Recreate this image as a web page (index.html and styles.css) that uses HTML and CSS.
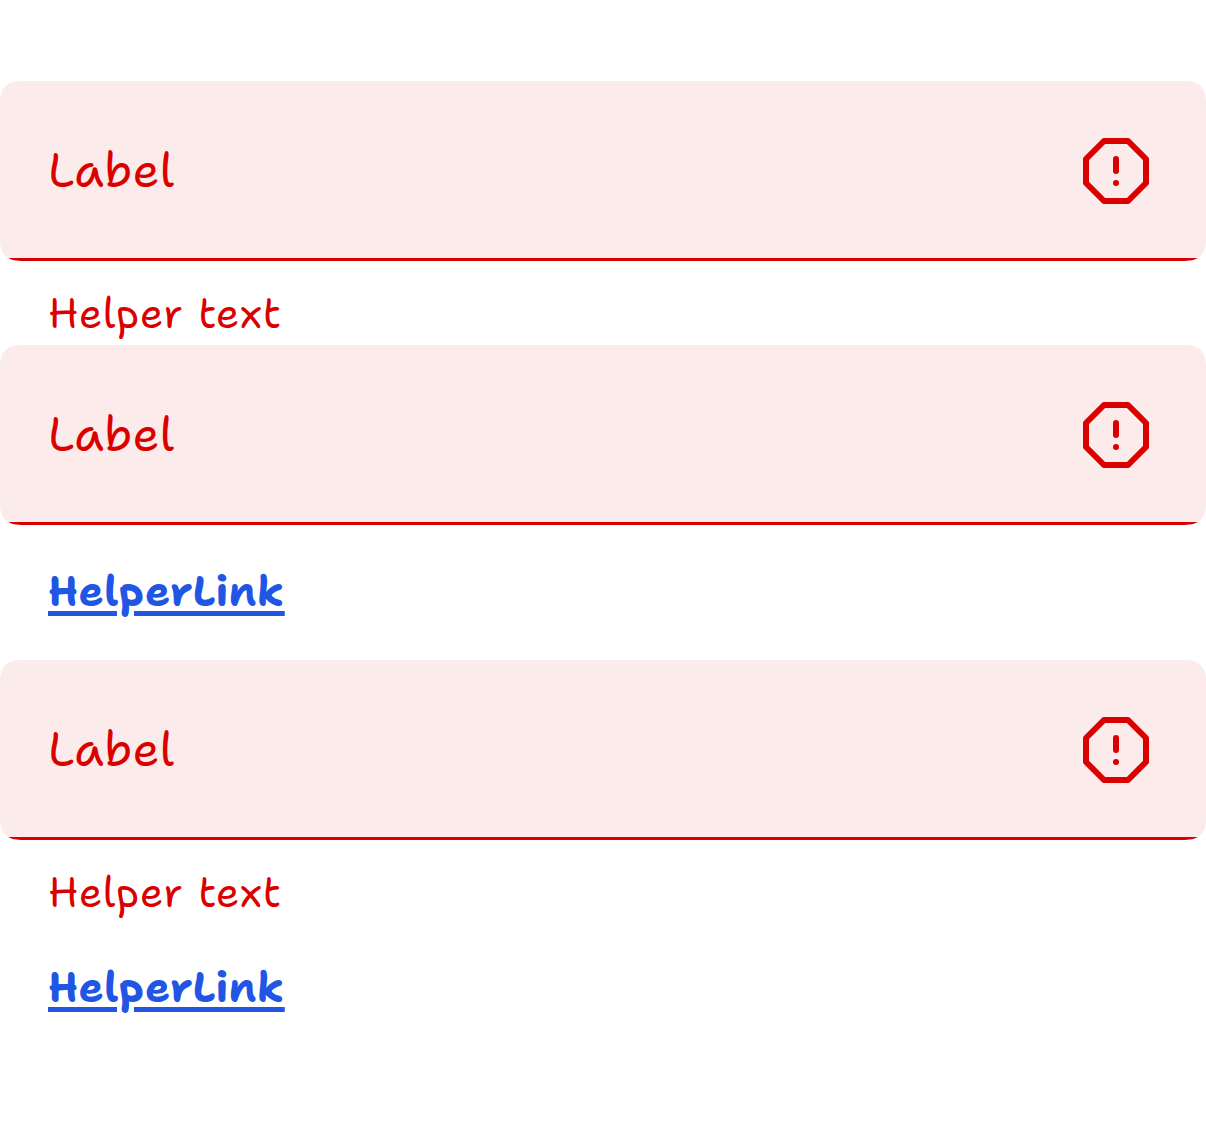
FILE: index.html
```html
<!DOCTYPE html>
<html lang="en">
<head>
<meta charset="utf-8">
<title>Input fields</title>
<link rel="stylesheet" href="styles.css">
</head>
<body>
<svg class="symbols" aria-hidden="true">
  <symbol id="error" viewBox="0 0 24 24">
    <path d="M8 2H16L22 8V16L16 22H8L2 16V8Z M12 8V12 M12 16H12.01" fill="none" stroke="currentColor" stroke-width="2" stroke-linecap="round" stroke-linejoin="round"/>
  </symbol>
</svg>
<main class="form">
  <section>
    <div class="field"><span class="label">Label</span><svg class="icon"><use href="#error"/></svg></div>
    <p class="helper">Helper text</p>
  </section>
  <section>
    <div class="field"><span class="label">Label</span><svg class="icon"><use href="#error"/></svg></div>
    <div class="link-row link-row-alone"><a class="link" href="#">HelperLink</a></div>
  </section>
  <section>
    <div class="field"><span class="label">Label</span><svg class="icon"><use href="#error"/></svg></div>
    <p class="helper">Helper text</p>
    <div class="link-row"><a class="link" href="#">HelperLink</a></div>
  </section>
</main>
</body>
</html>
```
FILE: styles.css
```css
body {
  margin: 0;
  background: #fff;
  color: #db0000;
  font-family: "Shantell Sans", Lato, sans-serif;
}
.symbols { display: none; }
.form { padding-top: 81px; }
.field {
  display: flex;
  align-items: center;
  justify-content: space-between;
  box-sizing: border-box;
  height: 180px;
  padding: 0 54px 0 48px;
  border-radius: 20px;
  background: linear-gradient(#db0000, #db0000) bottom / 100% 3px no-repeat #fbebeb;
}
@supports (corner-shape: superellipse(1.5)) {
  .field {
    border-radius: 24px;
    corner-shape: superellipse(1.5);
  }
}
.label {
  padding-bottom: 2px;
  font-size: 48px;
  line-height: 72px;
  letter-spacing: 0.3px;
}
.icon { width: 72px; height: 72px; }
.helper {
  box-sizing: border-box;
  height: 84px;
  margin: 0;
  padding: 22px 48px 0;
  font-size: 42px;
  line-height: 60px;
  letter-spacing: 0.45px;
}
.link-row {
  padding: 33px 48px;
  line-height: 60px;
}
.link-row-alone {
  box-sizing: border-box;
  height: 135px;
  padding-top: 36px;
}
.link {
  color: #2156e5;
  font-size: 42px;
  font-weight: 700;
  letter-spacing: 0.5px;
  text-decoration: underline;
  text-decoration-thickness: 5px;
  text-underline-offset: 5px;
}
```
